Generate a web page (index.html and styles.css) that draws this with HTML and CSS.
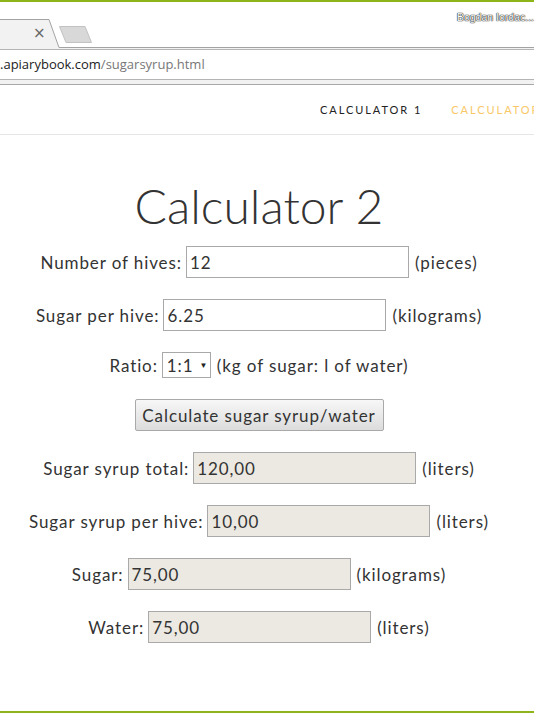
FILE: index.html
```html
<!DOCTYPE html>
<html lang="en">
<head>
<meta charset="utf-8">
<title>Sugar syrup calculator</title>
<link rel="stylesheet" href="styles.css">
</head>
<body>
<div class="window">
  <div class="chrome">
    <div class="tabstrip">
      <svg class="tabs" width="534" height="46" viewBox="0 0 534 46">
        <path d="M0 17 H49 L59 45 H534 V46 H0 Z" fill="#f2f2f2"/>
        <path d="M0 17.5 H49 L59 45.5 H534" fill="none" stroke="#a3a3a3" stroke-width="1"/>
        <path d="M59.5 24.5 H85 L91.5 40.5 H66 Z" fill="#d8d8d8" stroke="#c2c2c2" stroke-width="1"/>
      </svg>
      <span class="close">×</span>
      <span class="user">Bogdan Iordac...</span>
    </div>
    <div class="toolbar">
      <div class="omnibox"><span class="host">.apiarybook.com</span><span class="path">/sugarsyrup.html</span></div>
    </div>
  </div>
  <div class="page">
    <nav class="nav">
      <a class="nav-link">CALCULATOR 1</a>
      <a class="nav-link active">CALCULATOR 2</a>
    </nav>
    <main class="main">
      <h1 class="title">Calculator 2</h1>
      <form class="calc">
        <div class="row r1"><label>Number of hives:</label><input class="field" type="text" value="12"><span class="unit">(pieces)</span></div>
        <div class="row r2"><label>Sugar per hive:</label><input class="field" type="text" value="6.25"><span class="unit">(kilograms)</span></div>
        <div class="row r3"><label>Ratio:</label><span class="select">1:1<span class="arrow">▼</span></span><span class="unit">(kg of sugar: l of water)</span></div>
        <div class="row r4"><button type="button" class="btn">Calculate sugar syrup/water</button></div>
        <div class="row r5"><label>Sugar syrup total:</label><input class="field out" type="text" value="120,00" readonly><span class="unit">(liters)</span></div>
        <div class="row r6"><label>Sugar syrup per hive:</label><input class="field out" type="text" value="10,00" readonly><span class="unit">(liters)</span></div>
        <div class="row r6"><label>Sugar:</label><input class="field out" type="text" value="75,00" readonly><span class="unit">(kilograms)</span></div>
        <div class="row r6"><label>Water:</label><input class="field out" type="text" value="75,00" readonly><span class="unit">(liters)</span></div>
      </form>
    </main>
  </div>
</div>
</body>
</html>
```
FILE: styles.css
```css
html, body {
  margin: 0;
  padding: 0;
  width: 534px;
  height: 713px;
  overflow: hidden;
  background: #fff;
}
.window {
  height: 713px;
  box-sizing: border-box;
  border-top: 2px solid #8db51a;
  border-bottom: 2px solid #8db51a;
  display: flex;
  flex-direction: column;
}
.chrome {
  flex: none;
}
.tabstrip {
  position: relative;
  height: 46px;
  background: #fff;
}
.tabs {
  display: block;
}
.close {
  position: absolute;
  left: 33px;
  top: 23px;
  font: 15px "DejaVu Sans", sans-serif;
  color: #666;
  line-height: 16px;
}
.user {
  position: absolute;
  right: 0;
  top: 9px;
  font: 10.5px "Liberation Sans", sans-serif;
  color: #fff;
  text-shadow: 0 0 1px #222, 0 0 1px #222, 0 0 1px #222;
  letter-spacing: 0;
  white-space: nowrap;
}
.toolbar {
  height: 37px;
  background: #f2f2f2;
  border-bottom: 1px solid #a8a8a8;
  box-sizing: border-box;
  padding-top: 1px;
}
.omnibox {
  height: 31px;
  box-sizing: border-box;
  background: #fff;
  border-top: 1px solid #b4b4b4;
  border-bottom: 1px solid #b4b4b4;
  font: 13px "Open Sans", sans-serif;
  line-height: 29px;
  white-space: nowrap;
}
.host { color: #222; }
.path { color: #777; }

.page {
  flex: 1;
  display: flex;
  flex-direction: column;
  font-family: "Lato", sans-serif;
  color: #333;
}
.nav {
  height: 50px;
  box-sizing: border-box;
  border-bottom: 1px solid #e6e6e6;
  display: flex;
  align-items: center;
  padding-left: 320px;
  gap: 29px;
  white-space: nowrap;
  overflow: hidden;
}
.nav-link {
  font: 11px "Lato", sans-serif;
  letter-spacing: 1.95px;
  color: #222;
  flex: none;
}
.nav-link.active {
  color: #f8c867;
}
.main {
  width: 518px;
  text-align: center;
}
.title {
  margin: 44px 0 14px;
  font: 300 48px/53px "Lato", sans-serif;
  color: #333;
}
.calc {
  display: flex;
  flex-direction: column;
}
.row {
  height: 32px;
  display: flex;
  align-items: center;
  justify-content: center;
  font-size: 17px;
  letter-spacing: 0.9px;
  white-space: nowrap;
}
.r2 { margin-top: 21px; }
.r3 { margin-top: 18px; }
.r4 { margin-top: 18px; }
.r5 { margin-top: 21px; }
.r6 { margin-top: 21px; }
.row label { margin-right: 4px; }
.unit { margin-left: 6px; }
.field {
  width: 223px;
  height: 32px;
  box-sizing: border-box;
  border: 1px solid #a9a9a9;
  padding: 0 3px;
  font: 17px "Lato", sans-serif;
  letter-spacing: 0.9px;
  color: #333;
  background: #fff;
  margin: 0;
}
.field.out {
  background: #ebe9e2;
}
.select {
  width: 49px;
  height: 26px;
  box-sizing: border-box;
  border: 1px solid #a9a9a9;
  background: #fff;
  display: flex;
  align-items: center;
  padding-left: 4px;
  font-size: 17px;
}
.arrow {
  font-size: 8px;
  margin-left: 6px;
  color: #222;
}
.btn {
  width: 249px;
  height: 32px;
  border: 1px solid #a9a9a9;
  border-radius: 2px;
  background: linear-gradient(#f7f7f7, #dcdcdc);
  font: 17px "Lato", sans-serif;
  letter-spacing: 0.9px;
  color: #333;
  padding: 0;
}
```
